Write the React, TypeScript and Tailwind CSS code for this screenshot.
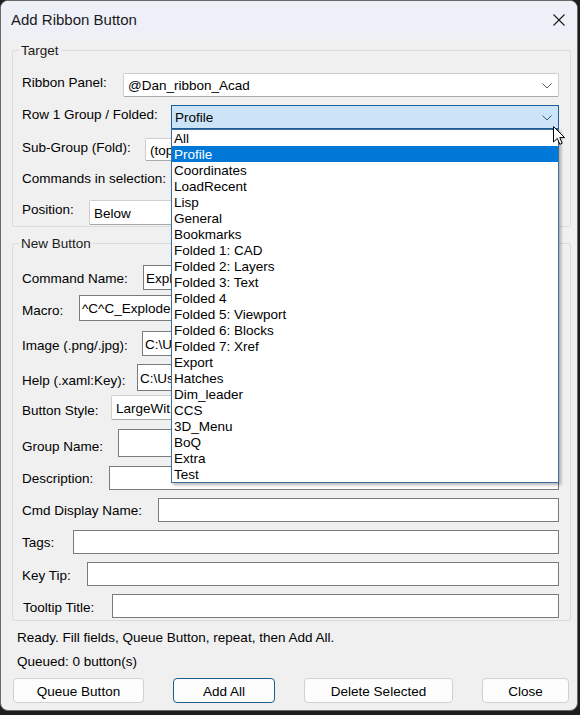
import React from "react";

const items = [
  "All",
  "Profile",
  "Coordinates",
  "LoadRecent",
  "Lisp",
  "General",
  "Bookmarks",
  "Folded 1: CAD",
  "Folded 2: Layers",
  "Folded 3: Text",
  "Folded 4",
  "Folded 5: Viewport",
  "Folded 6: Blocks",
  "Folded 7: Xref",
  "Export",
  "Hatches",
  "Dim_leader",
  "CCS",
  "3D_Menu",
  "BoQ",
  "Extra",
  "Test",
];

function Chevron({ color = "#5a5a5a" }: { color?: string }) {
  return (
    <svg width="10" height="6" viewBox="0 0 10 6" className="shrink-0">
      <path d="M0.5 0.5 L5 5 L9.5 0.5" fill="none" stroke={color} strokeWidth="1" />
    </svg>
  );
}

function Combo({ text, h }: { text: string; h: string }) {
  return (
    <div
      className={`flex-1 ${h} flex items-center justify-between bg-white border border-[#cfcfcf] border-b-[#a8a8a8] rounded-[2px] pl-[4px] pr-[6px] pt-[2px] overflow-hidden`}
    >
      <span className="whitespace-nowrap">{text}</span>
      <Chevron />
    </div>
  );
}

function Input({ text, h }: { text?: string; h: string }) {
  return (
    <div className={`flex-1 ${h} flex items-center bg-white border border-[#7a7a7a] pl-[2px] pt-[2px] overflow-hidden`}>
      <span className="whitespace-nowrap">{text}</span>
    </div>
  );
}

export default function App() {
  return (
    <div className="w-[580px] h-[715px] bg-[#1e1e1e] font-['Liberation_Sans',Arial,sans-serif] text-[13.5px] leading-[16px] text-[#000] overflow-hidden">
      <div className="relative w-[578px] h-[711px] bg-[#f0f0f0] border border-[#6a6a6a] rounded-[8px] overflow-hidden">
        {/* title bar */}
        <div className="h-[38px] bg-[#eef0f8] flex items-center justify-between pl-[10px] pr-[12px]">
          <span className="text-[15px] leading-[20px] text-[#1a1a1a]">Add Ribbon Button</span>
          <svg width="12" height="12" viewBox="0 0 12 12">
            <path d="M0.5 0.5 L11.5 11.5 M11.5 0.5 L0.5 11.5" stroke="#1a1a1a" strokeWidth="1.1" />
          </svg>
        </div>

        {/* Target */}
        <fieldset className="ml-[11px] mt-[3px] w-[559px] border border-[#dcdcdc] rounded-[2px] p-0">
          <legend className="ml-[6px] px-[2px] pt-[2px] leading-[14px] text-[#1a1a1a]">Target</legend>
          <div className="pl-[9px] pr-[11px] pt-[15px] pb-[1px] flex flex-col">
            <div className="flex items-start h-[24px] mb-[8px]">
              <span className="w-[101px] shrink-0 mt-[2px] whitespace-nowrap">Ribbon Panel:</span>
              <Combo text="@Dan_ribbon_Acad" h="h-[24px]" />
            </div>
            <div className="flex items-start h-[24px] mb-[9px]">
              <span className="w-[149px] shrink-0 mt-[2px] whitespace-nowrap">Row 1 Group / Folded:</span>
              <div className="flex-1 h-[24px] flex items-center justify-between bg-[#cce4f7] border border-[#1f5f99] pl-[3px] pr-[6px] pt-[2px]">
                <span>Profile</span>
                <Chevron color="#3a5a78" />
              </div>
            </div>
            <div className="flex items-start h-[23px] mb-[8px]">
              <span className="w-[123px] shrink-0 mt-[2px] whitespace-nowrap">Sub-Group (Fold):</span>
              <Combo text="(top" h="h-[23px]" />
            </div>
            <div className="flex items-start h-[23px] mb-[8px]">
              <span className="w-[148px] shrink-0 mt-[2px] whitespace-nowrap">Commands in selection:</span>
            </div>
            <div className="flex items-start h-[25px]">
              <span className="w-[67px] shrink-0 mt-[2px] whitespace-nowrap">Position:</span>
              <Combo text="Below" h="h-[25px]" />
            </div>
          </div>
        </fieldset>

        {/* New Button */}
        <fieldset className="ml-[11px] mt-[8px] w-[559px] border border-[#dcdcdc] rounded-[2px] p-0">
          <legend className="ml-[6px] px-[2px] pt-[2px] leading-[14px] text-[#1a1a1a]">New Button</legend>
          <div className="pl-[9px] pr-[11px] pt-[14px] pb-[2px] flex flex-col">
            <div className="flex items-start h-[25px] mb-[5px]">
              <span className="w-[121px] shrink-0 mt-[6px] whitespace-nowrap">Command Name:</span>
              <Input text="Expl" h="h-[25px]" />
            </div>
            <div className="flex items-start h-[26px] mb-[10px]">
              <span className="w-[57px] shrink-0 mt-[8px] whitespace-nowrap">Macro:</span>
              <Input text="^C^C_Explode" h="h-[26px]" />
            </div>
            <div className="flex items-start h-[25px] mb-[8px]">
              <span className="w-[120px] shrink-0 mt-[7px] whitespace-nowrap">Image (.png/.jpg):</span>
              <Input text="C:\U" h="h-[25px]" />
            </div>
            <div className="flex items-start h-[27px] mb-[4px]">
              <span className="w-[115px] shrink-0 mt-[9px] whitespace-nowrap">Help (.xaml:Key):</span>
              <Input text="C:\Us" h="h-[27px]" />
            </div>
            <div className="flex items-start h-[25px] mb-[9px]">
              <span className="w-[89px] shrink-0 mt-[8px] whitespace-nowrap">Button Style:</span>
              <Combo text="LargeWit" h="h-[25px]" />
            </div>
            <div className="flex items-start h-[28px] mb-[9px]">
              <span className="w-[96px] shrink-0 mt-[10px] whitespace-nowrap">Group Name:</span>
              <Input h="h-[28px]" />
            </div>
            <div className="flex items-start h-[24px] mb-[8px]">
              <span className="w-[87px] shrink-0 mt-[5px] whitespace-nowrap">Description:</span>
              <Input h="h-[24px]" />
            </div>
            <div className="flex items-start h-[24px] mb-[8px]">
              <span className="w-[136px] shrink-0 mt-[5px] whitespace-nowrap">Cmd Display Name:</span>
              <Input h="h-[24px]" />
            </div>
            <div className="flex items-start h-[24px] mb-[8px]">
              <span className="w-[51px] shrink-0 mt-[5px] whitespace-nowrap">Tags:</span>
              <Input h="h-[24px]" />
            </div>
            <div className="flex items-start h-[24px] mb-[8px]">
              <span className="w-[65px] shrink-0 mt-[6px] whitespace-nowrap">Key Tip:</span>
              <Input h="h-[24px]" />
            </div>
            <div className="flex items-start h-[24px]">
              <span className="w-[90px] shrink-0 mt-[6px] pl-[1px] whitespace-nowrap">Tooltip Title:</span>
              <Input h="h-[24px]" />
            </div>
          </div>
        </fieldset>

        {/* status */}
        <div className="pl-[16px] mt-[9px]">Ready. Fill fields, Queue Button, repeat, then Add All.</div>
        <div className="pl-[16px] mt-[8px]">Queued: 0 button(s)</div>

        {/* buttons */}
        <div className="flex pl-[12px] gap-[29px] mt-[8px]">
          <div className="w-[131px] h-[25px] flex items-center justify-center pt-[2px] bg-[#fdfdfd] border border-[#d0d0d0] rounded-[4px]">
            Queue Button
          </div>
          <div className="w-[102px] h-[25px] flex items-center justify-center pt-[2px] bg-[#fdfdfd] border border-[#1b5e8e] rounded-[4px]">
            Add All
          </div>
          <div className="w-[149px] h-[25px] flex items-center justify-center pt-[2px] bg-[#fdfdfd] border border-[#d0d0d0] rounded-[4px]">
            Delete Selected
          </div>
          <div className="w-[87px] h-[25px] flex items-center justify-center pt-[2px] bg-[#fdfdfd] border border-[#d0d0d0] rounded-[4px]">
            Close
          </div>
        </div>

        {/* dropdown list overlay */}
        <div className="absolute left-[170px] top-[128px] w-[388px] h-[354px] bg-white border border-[#3f6f9f] shadow-[2px_2px_3px_rgba(0,0,0,0.3)] flex flex-col">
          {items.map((it) => (
            <div
              key={it}
              className={
                it === "Profile"
                  ? "h-[16px] leading-[15px] pt-[1px] pl-[2px] bg-[#0078d7] text-white whitespace-nowrap"
                  : "h-[16px] leading-[15px] pt-[1px] pl-[2px] text-black whitespace-nowrap"
              }
            >
              {it}
            </div>
          ))}
        </div>

        {/* mouse cursor */}
        <svg className="absolute left-[552px] top-[125px]" width="13" height="20" viewBox="0 0 13 20">
          <path
            d="M0.5 0.5 L0.5 16 L4.3 12.4 L6.8 18.3 L9.2 17.3 L6.8 11.6 L11.6 11.6 Z"
            fill="#ffffff"
            stroke="#000000"
            strokeWidth="1"
            strokeLinejoin="round"
          />
        </svg>
      </div>
    </div>
  );
}
